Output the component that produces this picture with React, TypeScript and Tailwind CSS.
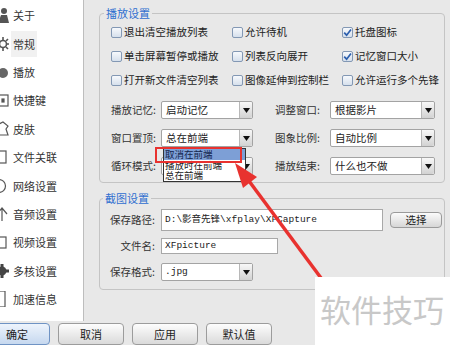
import React from "react";

const ink = "#555";

function NavIcon({ kind }: { kind: string }) {
  // only the right part of each icon shows at the window's left edge
  return (
    <span className="w-[9px] h-[16px] overflow-hidden shrink-0 block">
      <svg width="16" height="16" viewBox="0 0 16 16" className="-ml-[7px] block">
        {kind === "about" && (
          <g fill={ink}>
            <circle cx="11" cy="4" r="3" />
            <path d="M5 16 L8 8 H14 L16 16 Z" />
          </g>
        )}
        {kind === "gear" && (
          <g fill="none" stroke={ink} strokeWidth="1.6">
            <circle cx="10" cy="8" r="3.5" />
            <path d="M10 1v3M10 12v3M3 8h3M14 8h2M5 3l2 2M13 11l2 2M5 13l2-2M13 5l2-2" />
          </g>
        )}
        {kind === "play" && <circle cx="10" cy="9" r="5" fill="#666" />}
        {kind === "keys" && (
          <g fill="none" stroke={ink} strokeWidth="1.2">
            <rect x="4" y="3" width="11" height="11" />
            <rect x="9" y="7" width="2" height="3" fill={ink} />
          </g>
        )}
        {kind === "skin" && (
          <path d="M4 4 L10 1 L15 5 L13 8 L15 14 H5" fill="none" stroke={ink} strokeWidth="1.2" />
        )}
        {kind === "file" && <rect x="3" y="2" width="10" height="12" fill="none" stroke={ink} strokeWidth="1.2" />}
        {kind === "net" && <circle cx="6" cy="8" r="6.5" fill="none" stroke={ink} strokeWidth="1.2" />}
        {kind === "audio" && (
          <path d="M4 8 L9 2 L14 8 M9 2 V15" fill="none" stroke={ink} strokeWidth="1.2" />
        )}
        {kind === "video" && <rect x="3" y="3" width="10" height="11" fill="none" stroke={ink} strokeWidth="1.2" />}
        {kind === "cores" && (
          <g fill="#444">
            <circle cx="9" cy="8" r="4.5" />
            <rect x="7.5" y="1" width="3" height="14" />
            <rect x="2" y="6.5" width="14" height="3" />
          </g>
        )}
        {kind === "speed" && <rect x="3" y="0" width="9" height="16" fill="none" stroke={ink} strokeWidth="1.2" />}
      </svg>
    </span>
  );
}

const nav = [
  { label: "关于", icon: "about" },
  { label: "常规", icon: "gear", active: true },
  { label: "播放", icon: "play" },
  { label: "快捷键", icon: "keys" },
  { label: "皮肤", icon: "skin" },
  { label: "文件关联", icon: "file" },
  { label: "网络设置", icon: "net" },
  { label: "音频设置", icon: "audio" },
  { label: "视频设置", icon: "video" },
  { label: "多核设置", icon: "cores" },
  { label: "加速信息", icon: "speed" },
];

function Box({ checked }: { checked?: boolean }) {
  return (
    <span className="w-[11px] h-[11px] rounded-[2px] border border-[#8398b4] bg-linear-to-b from-[#f7f9fc] to-[#d6e0ec] flex items-center justify-center shrink-0">
      {checked && (
        <svg width="9" height="9" viewBox="0 0 9 9">
          <path d="M1.2 4.6 L3.6 7.2 L8 1.4" stroke="#2c5fae" strokeWidth="1.7" fill="none" />
        </svg>
      )}
    </span>
  );
}

function Select({ value, w }: { value: string; w: string }) {
  return (
    <div className={`flex h-[18px] ${w} bg-white border border-[#a3a3a3] rounded-[2px] items-center shrink-0`}>
      <span className="flex-1 pl-[4px] text-[10.5px] leading-none text-[#222] whitespace-nowrap">{value}</span>
      <span className="w-[13px] h-full border-l border-[#b8b8b8] bg-linear-to-b from-[#f8f8f8] to-[#d2d2d2] flex items-center justify-center rounded-r-[2px]">
        <svg width="7" height="5" viewBox="0 0 7 5">
          <path d="M0 0h7L3.5 5z" fill="#111" />
        </svg>
      </span>
    </div>
  );
}

const checks = [
  ["退出清空播放列表", false],
  ["允许待机", false],
  ["托盘图标", true],
  ["单击屏幕暂停或播放", false],
  ["列表反向展开", false],
  ["记忆窗口大小", true],
  ["打开新文件清空列表", false],
  ["图像延伸到控制栏", false],
  ["允许运行多个先锋", false],
] as const;

const selects = [
  ["播放记忆:", "启动记忆", "调整窗口:", "根据影片"],
  ["窗口置顶:", "总在前端", "图象比例:", "自动比例"],
  ["循环模式:", "", "播放结束:", "什么也不做"],
];

export default function App() {
  return (
    <div className="w-[450px] h-[345px] overflow-hidden relative bg-[#e8e8e8] flex flex-col font-['Noto_Sans_CJK_SC','Noto_Sans',sans-serif] text-[#222]">
      <div className="flex h-[328px]">
        {/* sidebar */}
        <div className="w-[84px] bg-white border-r border-[#bdbdbd] pt-[1px]">
          {nav.map((n) => (
            <div key={n.label} className="h-[28.4px] flex items-center">
              <NavIcon kind={n.icon} />
              <span
                className={`ml-[2px] px-[2px] text-[11px] leading-[26px] text-[#333] whitespace-nowrap ${
                  n.active ? "bg-[#f1f1f1]" : ""
                }`}
              >
                {n.label}
              </span>
            </div>
          ))}
        </div>

        {/* main */}
        <div className="flex-1 pl-[15px] pr-[5px] pt-[6px]">
          <fieldset className="border border-[#c4c4c4] rounded-[4px] pb-[2px]">
            <legend className="ml-[4px] px-[2px] text-[11px] leading-[14px] text-[#2f6ed0]">播放设置</legend>
            <div className="grid grid-cols-[121px_110px_1fr] pl-[11px]">
              {checks.map(([t, c]) => (
                <div key={t} className="h-[24px] flex items-center gap-[2px]">
                  <Box checked={c} />
                  <span className="text-[10.5px] leading-none whitespace-nowrap">{t}</span>
                </div>
              ))}
            </div>
            <div className="mt-[4px] pl-[11px]">
              {selects.map(([l1, v1, l2, v2]) => (
                <div key={l1} className="h-[28px] flex items-center">
                  <div className="w-[164px] flex items-center">
                    <span className="w-[50px] text-[10.5px] leading-none text-[#333] whitespace-nowrap">{l1}</span>
                    <Select value={v1} w="w-[92px]" />
                  </div>
                  <span className="w-[55px] text-[10.5px] leading-none text-[#333] whitespace-nowrap">{l2}</span>
                  <Select value={v2} w="w-[105px]" />
                </div>
              ))}
            </div>
          </fieldset>

          <fieldset className="mt-[8px] border border-[#c4c4c4] rounded-[4px] pt-[2px] pb-[4px]">
            <legend className="ml-[3px] px-[2px] text-[11px] leading-[14px] text-[#2f6ed0]">截图设置</legend>
            <div className="h-[26px] flex items-center">
              <span className="w-[55px] text-right text-[10.5px] leading-none text-[#333]">保存路径:</span>
              <div className="ml-[6px] w-[222px] h-[22px] bg-white border border-[#a8a8a8] flex items-center pl-[3px] text-[9.5px] font-['Liberation_Mono','Noto_Sans_CJK_SC',monospace] whitespace-nowrap overflow-hidden">
                D:\影音先锋\xfplay\XFCapture
              </div>
              <button className="ml-[7px] w-[52px] h-[16px] rounded-[4px] border border-[#9a9a9a] bg-linear-to-b from-[#fbfbfb] to-[#d6d6d6] text-[10.5px] leading-none">
                选择
              </button>
            </div>
            <div className="h-[26px] flex items-center">
              <span className="w-[55px] text-right text-[10.5px] leading-none text-[#333]">文件名:</span>
              <div className="ml-[6px] w-[117px] h-[16px] bg-white border border-[#a8a8a8] flex items-center pl-[3px] text-[9.5px] font-['Liberation_Mono',monospace]">
                XFpicture
              </div>
            </div>
            <div className="h-[26px] flex items-center">
              <span className="w-[55px] text-right text-[10.5px] leading-none text-[#333]">保存格式:</span>
              <div className="ml-[6px]">
                <div className="flex h-[18px] w-[92px] bg-white border border-[#a3a3a3] rounded-[2px] items-center">
                  <span className="flex-1 pl-[3px] text-[9.5px] font-['Liberation_Mono',monospace] leading-none">.jpg</span>
                  <span className="w-[13px] h-full border-l border-[#b8b8b8] bg-linear-to-b from-[#f8f8f8] to-[#d2d2d2] flex items-center justify-center">
                    <svg width="7" height="5" viewBox="0 0 7 5">
                      <path d="M0 0h7L3.5 5z" fill="#111" />
                    </svg>
                  </span>
                </div>
              </div>
            </div>
          </fieldset>
        </div>
      </div>

      {/* bottom buttons */}
      <div className="flex gap-[8px] pt-[2px] -ml-[16px]">
        <button className="w-[66px] h-[22px] shrink-0 rounded-[4px] border border-[#6f93c4] bg-linear-to-b from-[#eef4fc] to-[#c6d8ef] text-[11px] leading-none">
          确定
        </button>
        {["取消", "应用", "默认值"].map((b) => (
          <button
            key={b}
            className="w-[66px] h-[22px] shrink-0 rounded-[4px] border border-[#9c9c9c] bg-linear-to-b from-[#fdfdfd] to-[#dadada] text-[11px] leading-none"
          >
            {b}
          </button>
        ))}
      </div>

      {/* open dropdown list of 窗口置顶 */}
      <div className="absolute left-[163px] top-[148px] w-[83px] bg-white border border-[#333] text-[9.5px] leading-[10.5px] whitespace-nowrap">
        <div className="bg-[#7d9fd6] text-[#14264d] pl-[1px]">取消在前端</div>
        <div className="pl-[1px]">播放时在前端</div>
        <div className="pl-[1px]">总在前端</div>
      </div>
      <div className="absolute left-[155px] top-[147px] w-[87px] h-[16px] border-[2.5px] border-[#e8322f]" />

      {/* red arrow */}
      <svg className="absolute left-0 top-0 pointer-events-none" width="450" height="345" viewBox="0 0 450 345">
        <line x1="324" y1="282" x2="249" y2="181" stroke="#e8322f" strokeWidth="3.5" />
        <polygon points="235,163 257,177 243,188" fill="#e8322f" />
      </svg>

      {/* watermark */}
      <div className="absolute left-[315px] top-[277px] w-[135px] h-[68px] bg-white flex items-start pl-[5px] pt-[16px]">
        <span className="text-[31px] leading-none text-[#c8c8c8]">软件技巧</span>
      </div>
    </div>
  );
}
